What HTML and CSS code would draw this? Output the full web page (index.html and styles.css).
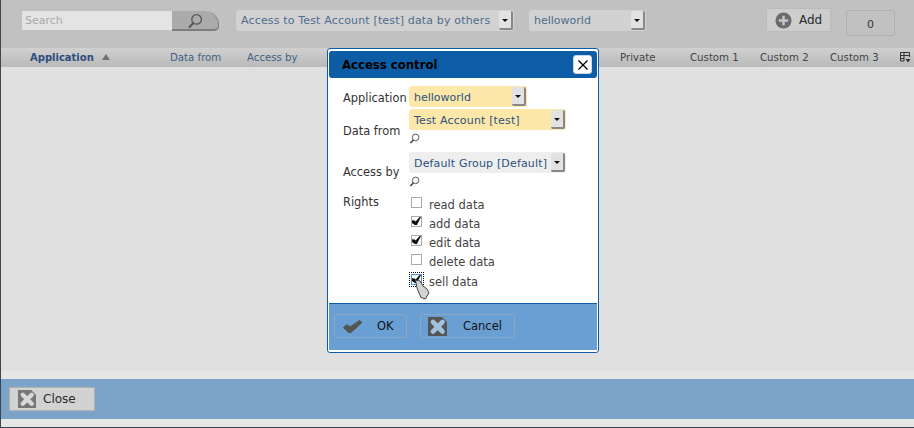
FILE: index.html
```html
<!DOCTYPE html>
<html lang="en">
<head>
    <meta charset="UTF-8">
    <title>Access control</title>
    <link rel="stylesheet" href="styles.css">
</head>
<body>
    <svg width="0" height="0" class="defs">
        <symbol id="lens" viewBox="0 0 20 20">
            <circle cx="12" cy="8" r="6" fill="none" stroke="currentColor" stroke-width="1.6"/>
            <path d="M8 12.5 2.5 18" stroke="currentColor" stroke-width="2.6" fill="none"/>
        </symbol>
        <symbol id="cross" viewBox="0 0 19 19">
            <path d="M0 0H14L19 5V19H0Z" fill="currentColor"/>
            <path d="M5 5 14.500 14.500M14.500 5 5 14.500" stroke="var(--cross)" stroke-width="4.600" stroke-linecap="round" fill="none"/>
        </symbol>
    </svg>

    <div class="page">
        <div class="toolbar">
            <div class="search">
                <span class="search-input">Search</span>
                <span class="search-btn"><svg width="16" height="16"><use href="#lens"/></svg></span>
            </div>
            <div class="select select-access"><span class="wide-text">Access to Test Account [test] data by others</span><i class="arrow"></i></div>
            <div class="select select-app"><span>helloworld</span><i class="arrow"></i></div>
            <div class="add-btn">
                <svg width="17" height="17" viewBox="0 0 18 18"><circle cx="9" cy="9" r="8.500" fill="#6b6b6b"/><path d="M9 4v10M4 9h10" stroke="#c8c8c8" stroke-width="2.600"/></svg>
                <span>Add</span>
            </div>
            <div class="counter">0</div>
        </div>

        <div class="thead">
            <span class="th th-app">Application <i class="sort"></i></span>
            <span class="th th-from">Data from</span>
            <span class="th th-by">Access by</span>
            <span class="th th-private">Private</span>
            <span class="th th-c1">Custom 1</span>
            <span class="th th-c2">Custom 2</span>
            <span class="th th-c3">Custom 3</span>
            <svg class="th-icon" width="11" height="11" viewBox="0 0 11 11"><path d="M.5 9V.5h9V5M.5 3.500h9M4 .5V9H.5M4 6.500H.5" fill="none" stroke="#333"/><path d="M5.500 7h5L8 10.500Z" fill="#333"/></svg>
        </div>

        <div class="content"></div>

        <div class="footer">
            <div class="close-btn">
                <svg class="close-icon" width="18" height="18"><use href="#cross"/></svg>
                <span>Close</span>
            </div>
        </div>
    </div>

    <div class="dialog">
        <div class="dialog-title">
            <span class="dialog-name">Access control</span>
            <span class="dialog-x"><svg width="10" height="10" viewBox="0 0 10 10"><path d="M.5.5l9 9M9.500.5l-9 9" stroke="#000" stroke-width="1.200"/></svg></span>
        </div>

        <div class="form">
            <div class="row row-app">
                <label>Application</label>
                <div class="select field-app filled"><span>helloworld</span><i class="arrow"></i></div>
            </div>
            <div class="row row-from">
                <label>Data from</label>
                <div class="field-stack">
                    <div class="select field-wide filled"><span class="wide-text">Test Account [test]</span><i class="arrow"></i></div>
                    <svg class="mini-lens" width="11" height="11"><use href="#lens"/></svg>
                </div>
            </div>
            <div class="row row-by">
                <label>Access by</label>
                <div class="field-stack">
                    <div class="select field-wide plain"><span class="wide-text">Default Group [Default]</span><i class="arrow"></i></div>
                    <svg class="mini-lens" width="11" height="11"><use href="#lens"/></svg>
                </div>
            </div>
            <div class="row row-rights">
                <label>Rights</label>
                <div class="checks">
                    <div class="check"><i class="box"></i><span>read data</span></div>
                    <div class="check"><i class="box on"></i><span>add data</span></div>
                    <div class="check"><i class="box on"></i><span>edit data</span></div>
                    <div class="check"><i class="box"></i><span>delete data</span></div>
                    <div class="check check-last"><i class="box on focus"></i><span>sell data</span></div>
                </div>
            </div>
        </div>

        <div class="dialog-foot">
            <div class="dlg-btn btn-ok">
                <svg width="21" height="15" viewBox="0 0 21 15"><path d="M1.500 8.500 5 5.500 8 8 17.500 1.500 20 3.500 9 13.500H6.500Z" fill="#555" stroke="#555" stroke-linejoin="round"/></svg>
                <span>OK</span>
            </div>
            <div class="dlg-btn btn-cancel">
                <svg class="cancel-icon" width="19" height="19"><use href="#cross"/></svg>
                <span>Cancel</span>
            </div>
        </div>
    </div>

    <svg class="cursor" width="16" height="21" viewBox="0 0 16 21">
        <path d="M1.500 1 6 2 9 7 13 10 15 14 13 17 11.500 20 7 18.500 3 9Z" fill="#d4d4d4" stroke="#444"/>
    </svg>
</body>
</html>
```

FILE: styles.css
```css
* {
    box-sizing: border-box;
}

html, body {
    margin: 0;
    height: 428px;
    overflow: hidden;
}

body {
    font-family: "DejaVu Sans", sans-serif;
    font-size: 11px;
    color: #333;
    background: #e6e6e6;
    position: relative;
}

.defs {
    position: absolute;
}

.page {
    width: 914px;
    height: 428px;
    border-left: 1px solid #3a4653;
    border-bottom: 1px solid #3a4653;
    display: flex;
    flex-direction: column;
}

/* toolbar */
.toolbar {
    height: 48px;
    background: #c1c1c1;
    display: flex;
    align-items: flex-start;
    padding-left: 21px;
}

.search {
    display: flex;
    margin-top: 11px;
    height: 19px;
}

.search-input {
    width: 150px;
    background: #e4e4e4;
    color: #a9a9a9;
    padding: 3px 3px;
}

.search-btn {
    width: 47px;
    height: 20px;
    background: #ababab;
    border-bottom: 2px solid #7d7d7d;
    border-right: 1px solid #7d7d7d;
    border-top-right-radius: 14px;
    border-bottom-right-radius: 5px;
    color: #555;
    display: flex;
    justify-content: center;
    padding-top: 2px;
}

.select {
    height: 21px;
    border-radius: 3px;
    display: flex;
    align-items: center;
    justify-content: space-between;
    padding: 0 1px 0 5px;
    color: #2b527e;
    line-height: 1;
}

.wide-text {
    letter-spacing: .16px;
}

.toolbar .select {
    background: #d2d2d2;
    color: #4e6c8c;
    margin-top: 10px;
}

.select-access {
    width: 278px;
    margin-left: 17px;
}

.select-app {
    width: 117px;
    margin-left: 15px;
}

.arrow {
    width: 14px;
    height: 19px;
    background: #e2e2e2;
    border-right: 2px solid #888;
    border-bottom: 2px solid #888;
    border-radius: 2px;
    position: relative;
    flex: none;
}

.arrow::after {
    content: "";
    position: absolute;
    left: 3px;
    top: 8px;
    border: 3px solid transparent;
    border-top: 3px solid #111;
}

.add-btn {
    width: 65px;
    height: 24px;
    margin: 8px 0 0 120px;
    background: #cdcdcd;
    border: 1px solid #bbb;
    display: flex;
    align-items: center;
    padding-left: 8px;
    gap: 7px;
    font-size: 12px;
    color: #2a2a2a;
}

.counter {
    width: 49px;
    height: 26px;
    margin: 10px 0 0 15px;
    border: 1px solid #afafaf;
    border-radius: 3px;
    display: flex;
    align-items: center;
    justify-content: center;
    padding-top: 2px;
    color: #333;
}

/* table head */
.thead {
    height: 19px;
    background: linear-gradient(#d0d0d0, #b9b9b9);
    color: #3f5f85;
    font-size: 10.200px;
    display: flex;
    align-items: center;
    flex: none;
}

.th {
    white-space: nowrap;
}

.th-app {
    font-weight: bold;
    color: #2d4d80;
    font-size: 10px;
    margin-left: 29px;
    width: 140px;
}

.sort {
    display: inline-block;
    border: 4px solid transparent;
    border-top: 0;
    border-bottom: 6px solid #707070;
    margin-left: 5px;
    vertical-align: 1px;
}

.th-from {
    width: 77px;
}

.th-by {
    width: 373px;
}

.th-private, .th-c1, .th-c2, .th-c3 {
    width: 70px;
    color: #444;
}

.content {
    flex: 1;
    background: #e0e0e0;
}

/* bottom band */
.footer {
    height: 56px;
    flex: none;
    background: linear-gradient(#e6e6e6 8px, #7ea3c8 8px, #7ea3c8 48px, #e6e6e6 48px);
    padding: 16px 0 0 8px;
}

.close-btn {
    width: 86px;
    height: 24px;
    background: #d2d2d2;
    border: 1px solid #b2b2b2;
    display: flex;
    align-items: center;
    padding-left: 8px;
    gap: 7px;
    font-size: 12px;
    color: #2a2a2a;
}

.close-icon {
    color: #777;
    --cross: #d8d8d8;
}

/* dialog */
.dialog {
    position: absolute;
    left: 327px;
    top: 48px;
    width: 272px;
    height: 305px;
    background: #fff;
    border: 1px solid #0c5da5;
    border-radius: 3px;
    padding: 2px 1px;
    display: flex;
    flex-direction: column;
}

.dialog-title {
    height: 27px;
    background: #0c5da5;
    border-radius: 3px;
    color: #000;
    font-weight: bold;
    font-size: 11.700px;
    display: flex;
    align-items: center;
    justify-content: space-between;
    padding: 0 5px 0 13px;
    flex: none;
}

.dialog-name {
    padding-top: 1px;
}

.dialog-x {
    width: 19px;
    height: 19px;
    background: #fff;
    border: 1px solid #c8d8ea;
    border-radius: 3px;
    display: flex;
    align-items: center;
    justify-content: center;
}

.form {
    flex: 1;
    padding: 8px 0 0 14px;
}

.form .select > span {
    padding-top: 1px;
}

.row {
    display: flex;
}

.row label {
    width: 66px;
    flex: none;
    font-size: 11.400px;
    color: #333;
}

.row-app {
    height: 23px;
}

.row-app label {
    padding-top: 5px;
}

.row-from {
    height: 43px;
}

.row-from label {
    padding-top: 15px;
}

.row-by {
    height: 45px;
}

.row-by label {
    padding-top: 13px;
}

.row-rights label {
    margin-top: -2px;
}

.field-app {
    width: 118px;
}

.field-wide {
    width: 157px;
}

.filled {
    background: #fde8aa;
}

.plain {
    background: #eeeeee;
}

.field-stack {
    display: flex;
    flex-direction: column;
}

.mini-lens {
    display: block;
    margin-top: 3px;
    color: #444;
}

.checks {
    margin-left: 2px;
    margin-top: -3px;
}

.check {
    display: flex;
    height: 19px;
    color: #444;
    font-size: 11.500px;
}

.check span {
    margin-left: 7px;
    padding-top: 4px;
}

.check-last {
    padding-top: 1px;
}

.box {
    width: 11px;
    height: 11px;
    margin-top: 3px;
    background: #fff;
    border: 1px solid #aaa;
    position: relative;
    flex: none;
}

.box.on::after {
    content: "";
    position: absolute;
    left: 0;
    top: 0;
    width: 9px;
    height: 8px;
    background: #111;
    clip-path: polygon(0 40%, 30% 45%, 40% 55%, 85% 0, 100% 0, 55% 100%, 30% 100%, 0 75%);
}

.box.focus {
    border-color: #4a90d9;
    outline: 1px dotted #000;
    outline-offset: 1px;
}

/* dialog buttons */
.dialog-foot {
    height: 47px;
    flex: none;
    background: #6a9fd4;
    border-top: 1px solid #0c5da5;
    display: flex;
    align-items: flex-start;
    padding: 10px 0 0 5px;
    gap: 13px;
    color: #111;
    font-size: 11.500px;
}

.dlg-btn {
    height: 24px;
    border: 1px solid #8fa8c2;
    border-radius: 3px;
    display: flex;
    align-items: center;
    padding-left: 7px;
}

.btn-ok {
    width: 73px;
    gap: 14px;
}

.btn-cancel {
    width: 95px;
    gap: 16px;
}

.cancel-icon {
    color: #555;
    --cross: #a3c2e0;
}

.cursor {
    position: absolute;
    left: 414px;
    top: 279px;
}
```
